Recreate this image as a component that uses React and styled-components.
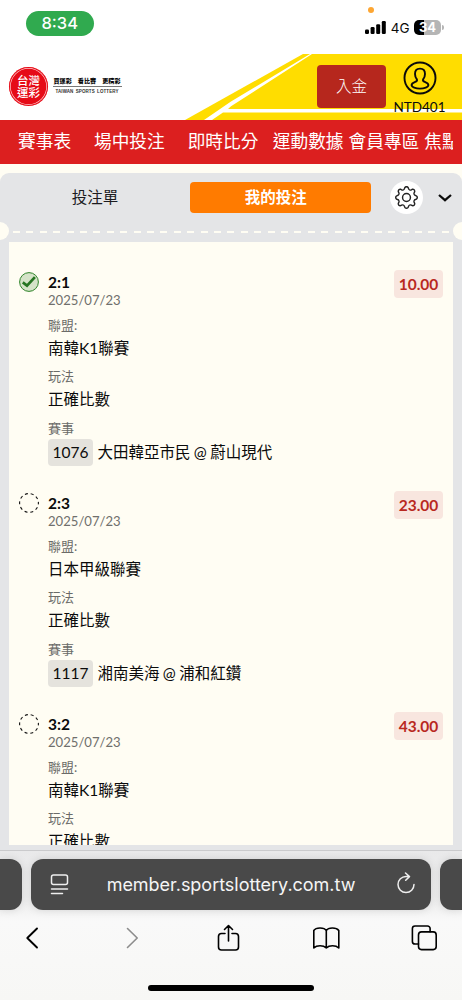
import React from "react";
import styled, { createGlobalStyle } from "styled-components";
import { BsGear } from "react-icons/bs";

const SANS = `Lato, "Noto Sans CJK TC", sans-serif`;
const SYSTEM = `Inter, "Noto Sans CJK TC", sans-serif`;

const GlobalStyle = createGlobalStyle`
  * { box-sizing: border-box; }
  body { margin: 0; background: #fffdf3; font-family: ${SANS}; color: #0b0b0b; }
`;

const Screen = styled.div`
  width: 462px;
  height: 1000px;
  overflow: hidden;
  display: flex;
  flex-direction: column;
  background: #fffdf3;
`;

const StatusBar = styled.div`
  position: relative;
  height: 53.5px;
  flex: none;
  display: flex;
  justify-content: space-between;
  align-items: flex-start;
  background: #fff;
  padding: 11px 19px 0 25.5px;
  font-family: ${SYSTEM};
`;
const Clock = styled.div`
  width: 68.5px;
  height: 25px;
  border-radius: 13px;
  background: #30aa4f;
  color: #fff;
  font-size: 16.5px;
  font-weight: 500;
  line-height: 25px;
  text-align: center;
`;
const Indicators = styled.div`
  display: flex;
  align-items: center;
  gap: 4.5px;
  padding-top: 8px;
  height: 25px;
`;
const Network = styled.span`
  font-size: 13.5px;
  line-height: 16px;
`;
const Battery = styled.div`
  position: relative;
  width: 27px;
  height: 15px;
  margin-right: 2px;
  border-radius: 5px;
  background: linear-gradient(90deg, #000 0 9.5px, #b5b5b5 9.5px);
  color: #fff;
  font-size: 13px;
  font-weight: 700;
  line-height: 15px;
  text-align: center;
  &::after {
    content: "";
    position: absolute;
    right: -3px;
    top: 5px;
    width: 2px;
    height: 5px;
    border-radius: 0 2px 2px 0;
    background: #b5b5b5;
  }
`;
const PrivacyDot = styled.i`
  position: absolute;
  left: 368px;
  top: 7px;
  width: 6px;
  height: 6px;
  border-radius: 50%;
  background: #fda632;
`;

const Header = styled.header`
  position: relative;
  height: 66px;
  flex: none;
  display: flex;
  align-items: flex-start;
  background: #fff;
  padding: 11.5px 0 0 9px;
`;
const Swoosh = styled.svg`
  position: absolute;
  right: 0;
  top: 0;
`;
const Brand = styled.div`
  position: relative;
  flex: none;
  display: flex;
  align-items: flex-start;
  gap: 4.5px;
  width: 121px;
  padding-top: 1.5px;
`;
const Seal = styled.div`
  flex: none;
  width: 39px;
  height: 39px;
  border-radius: 50%;
  background: #e60b17;
  box-shadow: inset 0 0 0 1px #e60b17, inset 0 0 0 1.7px #ffc9cb;
  color: #fff;
  font-size: 11.5px;
  font-weight: 500;
  line-height: 12px;
  text-align: center;
  padding-top: 8px;
`;
const Slogan = styled.div`
  width: 69px;
  padding-top: 10px;
`;
const SloganText = styled.div`
  display: flex;
  justify-content: space-between;
  padding: 0 1px;
  font-size: 6.1px;
  font-weight: 900;
  line-height: 8px;
  height: 10px;
  border-bottom: 1px solid #777;
  white-space: nowrap;
`;
const SloganLatin = styled.div`
  margin-top: 2px;
  font-family: "Liberation Sans", sans-serif;
  font-size: 4.5px;
  line-height: 5px;
  font-weight: 700;
  color: #333;
  text-align: center;
  white-space: nowrap;
  word-spacing: 1px;
  letter-spacing: 0.08px;
`;
const DepositButton = styled.button`
  position: relative;
  flex: none;
  width: 69px;
  height: 43px;
  margin-left: 187px;
  padding: 0 0 2px;
  border: 0;
  border-radius: 4px;
  background: #b6271d;
  color: #fff;
  font: 300 15.5px/40px ${SANS};
`;
const Account = styled.div`
  position: relative;
  flex: none;
  width: 54px;
  margin-left: 6.5px;
  margin-top: -4px;
  display: flex;
  flex-direction: column;
  align-items: center;
  font-size: 13.5px;
  line-height: 16px;
  svg { margin-bottom: 4px; }
`;

const Nav = styled.nav`
  height: 44.5px;
  flex: none;
  margin: 0;
  padding-left: 18px;
  display: flex;
  align-items: center;
  background: #dc1f1f;
  border-right: 9px solid #dc1f1f;
  overflow: hidden;
`;
const NavItem = styled.a`
  flex: none;
  margin-right: ${(p) => p.$gap}px;
  padding-top: 1px;
  color: #fff;
  font-size: 17.7px;
  line-height: 44px;
  white-space: nowrap;
`;

const Slip = styled.section`
  margin-top: 9px;
  height: 677px;
  flex: none;
  display: flex;
  flex-direction: column;
  border-radius: 9px 9px 0 0;
  background: #e4e5e7;
`;
const Tabs = styled.div`
  height: 49px;
  flex: none;
  display: flex;
  align-items: center;
  padding-left: 9px;
`;
const Tab = styled.button`
  width: ${(p) => (p.$active ? 181 : 172)}px;
  margin-right: ${(p) => (p.$active ? 19.5 : 8.5)}px;
  height: 31px;
  padding: ${(p) => (p.$active ? "0 8.5px 0 0" : "0")};
  border: 0;
  border-radius: 4px;
  background: ${(p) => (p.$active ? "#ff7b00" : "transparent")};
  color: ${(p) => (p.$active ? "#fff" : "#1b1b1f")};
  font: ${(p) => (p.$active ? 700 : 400)} 15.5px/31px ${SANS};
`;
const RoundButton = styled.button`
  width: 33px;
  height: 33px;
  margin-right: 15px;
  padding: 0;
  border: 0;
  border-radius: 50%;
  background: #fff;
  color: #222;
  display: grid;
  place-items: center;
`;
const Perforation = styled.div`
  height: 19.5px;
  flex: none;
  display: flex;
  align-items: center;
  justify-content: space-between;
`;
const Notch = styled.i`
  width: 9px;
  height: 18px;
  margin-bottom: 2px;
  background: #fffdf3;
  border-radius: ${(p) => (p.$right ? "9px 0 0 9px" : "0 9px 9px 0")};
`;
const Dashes = styled.i`
  width: 436px;
  height: 2px;
  background: repeating-linear-gradient(90deg, #fffdf3 0 7px, transparent 7px 13.4px);
`;
const BetList = styled.div`
  height: 603px;
  margin: 0 9px;
  padding-top: 30px;
  overflow: hidden;
  background: #fffdf3;
`;
const Bet = styled.article`
  display: flex;
  align-items: flex-start;
  height: 221px;
  padding: 0 10px 0 10px;
`;
const Status = styled.svg`
  flex: none;
  margin-right: 9px;
`;
const Details = styled.div`
  flex: 1;
`;
const Score = styled.div`
  font-size: 15.5px;
  font-weight: 700;
  line-height: 20px;
`;
const BetDate = styled.div`
  margin-bottom: 0.75px;
  color: #6f6f6c;
  font-size: 13.1px;
  line-height: 17px;
`;
const Field = styled.div`
  padding-top: 6.5px;
`;
const Label = styled.div`
  color: #6b6b68;
  font-size: 13px;
  line-height: 19px;
`;
const Value = styled.div`
  font-size: 15.5px;
  line-height: 26px;
  display: flex;
  align-items: center;
  white-space: pre;
`;
const MatchValue = styled(Value)`
  padding-top: 1px;
  word-spacing: -0.6px;
`;
const MatchNo = styled.span`
  width: 45px;
  height: 27px;
  margin-right: 4.5px;
  border-radius: 4px;
  background: #e5e3dd;
  line-height: 27px;
  text-align: center;
`;
const Amount = styled.div`
  width: 49px;
  height: 28px;
  margin-top: -2px;
  border-radius: 4px;
  background: #f8e6df;
  color: #b9291f;
  font-size: 15.5px;
  font-weight: 700;
  line-height: 28px;
  text-align: center;
`;

const Browser = styled.footer`
  flex: 1;
  display: flex;
  flex-direction: column;
  border-top: 1px solid #cacacc;
  background: linear-gradient(#e9e9ea, #f0f0f0 55px, #f9f9f9 70px, #f7f7f5);
`;
const AddressRow = styled.div`
  display: flex;
  justify-content: space-between;
  padding-top: 8px;
`;
const EdgeTab = styled.div`
  width: 22px;
  height: 50.5px;
  background: #494949;
  border-radius: ${(p) => (p.$right ? "12px 0 0 12px" : "0 12px 12px 0")};
  box-shadow: 0 0 9px rgba(0, 0, 0, 0.12);
`;
const Address = styled.div`
  width: 399.5px;
  height: 50.5px;
  border-radius: 12px;
  background: #494949;
  box-shadow: 0 0 9px rgba(0, 0, 0, 0.12);
  display: flex;
  align-items: center;
  justify-content: space-between;
  padding: 0 14px 0 19px;
  color: #f5f5f5;
  font-family: ${SYSTEM};
  font-size: 18px;
  letter-spacing: -0.02px;
  span { margin-right: 2px; }
`;
const Toolbar = styled.div`
  display: grid;
  grid-template-columns: 100px 97px 98px 98px;
  grid-auto-columns: 26px;
  grid-auto-flow: column;
  align-items: center;
  justify-items: start;
  height: 56px;
  padding-left: 18px;
`;
const ToolIcon = styled.svg`
  width: 28px;
  height: 28px;
  fill: none;
  stroke: ${(p) => (p.$muted ? "#8c8c8c" : "#000")};
  stroke-width: ${(p) => p.$weight || 1.6};
  stroke-linecap: round;
  stroke-linejoin: round;
`;
const HomeIndicator = styled.div`
  width: 166px;
  height: 6px;
  margin: 19.5px auto 0;
  border-radius: 3px;
  background: #000;
`;

const NAV_ITEMS = [
  ["賽事表", 22.9],
  ["場中投注", 22.9],
  ["即時比分", 14.4],
  ["運動數據", 5],
  ["會員專區", 4.9],
  ["焦點賽事", 0],
];

const BETS = [
  { won: true, score: "2:1", league: "南韓K1聯賽", no: "1076", match: "大田韓亞市民 @ 蔚山現代", amount: "10.00" },
  { won: false, score: "2:3", league: "日本甲級聯賽", no: "1117", match: "湘南美海 @ 浦和紅鑽", amount: "23.00" },
  { won: false, score: "3:2", league: "南韓K1聯賽", amount: "43.00" },
];

function StatusIcon({ won }) {
  return (
    <Status width="20" height="20" viewBox="0 0 20 20" fill="none">
      {won ? (
        <>
          <circle cx="10" cy="10" r="9.4" fill="#d5e3c8" stroke="#2f8429" strokeWidth="1" />
          <path d="M3.8 10.4 8 13.6 15.9 5.2" stroke="#267521" strokeWidth="2.7" />
        </>
      ) : (
        <circle cx="10" cy="10" r="9.4" stroke="#111" strokeWidth="1.1" strokeDasharray="3 2.906" strokeDashoffset="1.5" />
      )}
    </Status>
  );
}

export default function App() {
  return (
    <Screen>
      <GlobalStyle />
      <StatusBar>
        <PrivacyDot />
        <Clock>8:34</Clock>
        <Indicators>
          <svg width="21" height="13" viewBox="0 0 21 13">
            <rect x="0" y="8.5" width="4" height="4.5" rx="1.2" />
            <rect x="5.6" y="6" width="4" height="7" rx="1.2" />
            <rect x="11.2" y="3.2" width="4" height="9.8" rx="1.2" />
            <rect x="16.8" y="0" width="4" height="13" rx="1.2" />
          </svg>
          <Network>4G</Network>
          <Battery>34</Battery>
        </Indicators>
      </StatusBar>

      <Header>
        <Swoosh width="277" height="66" viewBox="0 0 277 66">
          <path d="M0 66 118 0H277V66Z" fill="#ffdd00" />
          <path d="M125 0 46 47.5 19 66H27L38 58.5H277V55H43L46 52.3 127 0Z" fill="#fff" />
        </Swoosh>
        <Brand>
          <Seal>台灣<br />運彩</Seal>
          <Slogan>
            <SloganText><span>買運彩</span><span>看比賽</span><span>更精彩</span></SloganText>
            <SloganLatin>TAIWAN SPORTS LOTTERY</SloganLatin>
          </Slogan>
        </Brand>
        <DepositButton>入金</DepositButton>
        <Account>
          <svg width="34" height="34" viewBox="0 0 34 34" fill="none" stroke="#0b0b0b" strokeWidth="1.9">
            <circle cx="17" cy="17" r="15.5" />
            <path d="M17 7.6c-3.4 0-5 2.3-5 5.3 0 2.4.8 4 1.9 5.5.6 1.2-.2 1.9-1.7 2.5-2 .8-3.6 1.7-3.6 3.2 0 2.2 4.3 3.5 8.4 3.5s8.4-1.3 8.4-3.5c0-1.5-1.6-2.4-3.6-3.2-1.5-.6-2.3-1.3-1.7-2.5 1.1-1.5 1.9-3.1 1.9-5.500 0-3-1.6-5.3-5-5.3Z" />
          </svg>
          NTD401
        </Account>
      </Header>

      <Nav>
        {NAV_ITEMS.map(([text, gap]) => (
          <NavItem key={text} $gap={gap}>{text}</NavItem>
        ))}
      </Nav>

      <Slip>
        <Tabs>
          <Tab>投注單</Tab>
          <Tab $active>我的投注</Tab>
          <RoundButton>
            <BsGear size={23} />
          </RoundButton>
          <svg width="14" height="9" viewBox="0 0 14 9" fill="none" stroke="#0b0b0b" strokeWidth="2.2">
            <path d="M1 2 7 7.2 13 2" />
          </svg>
        </Tabs>
        <Perforation>
          <Notch />
          <Dashes />
          <Notch $right />
        </Perforation>
        <BetList>
          {BETS.map((bet) => (
            <Bet key={bet.score}>
              <StatusIcon won={bet.won} />
              <Details>
                <Score>{bet.score}</Score>
                <BetDate>2025/07/23</BetDate>
                <Field><Label>聯盟:</Label><Value>{bet.league}</Value></Field>
                <Field><Label>玩法</Label><Value>正確比數</Value></Field>
                {bet.match && (
                  <Field><Label>賽事</Label><MatchValue><MatchNo>{bet.no}</MatchNo>{bet.match}</MatchValue></Field>
                )}
              </Details>
              <Amount>{bet.amount}</Amount>
            </Bet>
          ))}
        </BetList>
      </Slip>

      <Browser>
        <AddressRow>
          <EdgeTab />
          <Address>
            <svg width="19" height="21" viewBox="0 0 19 21" fill="none" stroke="#eee" strokeWidth="1.5" strokeLinecap="round">
              <rect x="1.5" y="1" width="16" height="9.5" rx="2" />
              <path d="M1.5 15H17.5M1.5 19.5H12.5" />
            </svg>
            <span>member.sportslottery.com.tw</span>
            <svg width="22" height="24" viewBox="0 0 22 24" fill="none" stroke="#eee" strokeWidth="1.5" strokeLinecap="round" strokeLinejoin="round">
              <path d="M19 12.5A8 8 0 1 1 11 4.5H14.5M10.5 1 14.5 4.6 10.7 8.3" />
            </svg>
          </Address>
          <EdgeTab $right />
        </AddressRow>
        <Toolbar>
          <ToolIcon viewBox="0 0 28 28" $weight={1.9}>
            <path d="M19 4.5 9.3 14 19 23.5" />
          </ToolIcon>
          <ToolIcon viewBox="0 0 28 28" $muted>
            <path d="M9.5 4.5 19.2 14 9.5 23.5" />
          </ToolIcon>
          <ToolIcon viewBox="0 0 28 28">
            <path d="M10 9.5H6.5a3 3 0 0 0-3 3V23a3 3 0 0 0 3 3h14a3 3 0 0 0 3-3V12.5a3 3 0 0 0-3-3H17M13.5 17V1.5M9.5 5.5l4-4 4 4" />
          </ToolIcon>
          <ToolIcon viewBox="0 0 28 28">
            <path d="M13.3 6.5C11.3 3.2 3 3 .8 6.5V24C3.8 21 10.3 21 13.3 24 16.3 21 22.8 21 25.8 24V6.5C23.3 3 15.3 3.2 13.3 6.5ZM13.3 6.5V24" />
          </ToolIcon>
          <ToolIcon viewBox="0 0 28 28">
            <path d="M7.5 20H4a2.6 2.6 0 0 1-2.6-2.6V4.6A2.6 2.6 0 0 1 4 2h12.5a2.6 2.6 0 0 1 2.6 2.6V7.8" />
            <rect x="7.5" y="7.9" width="17.7" height="17.7" rx="3" />
          </ToolIcon>
        </Toolbar>
        <HomeIndicator />
      </Browser>
    </Screen>
  );
}
